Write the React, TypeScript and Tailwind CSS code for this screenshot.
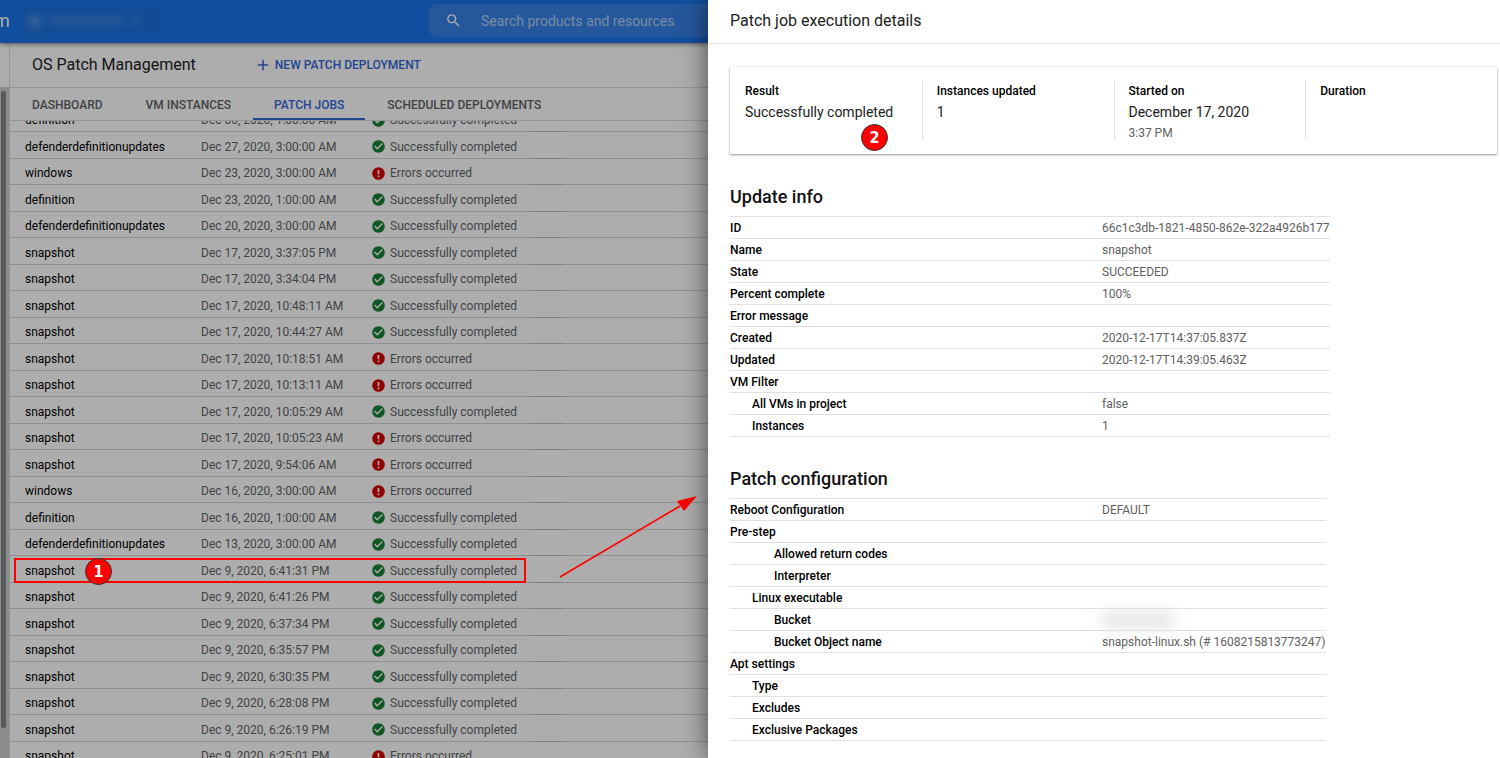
import React from 'react';
import { MdAdd, MdCheckCircle, MdSearch } from 'react-icons/md';

type Job = { name: string; date: string; ok: boolean; selected?: boolean };
type Detail = { label: string; value?: string; level?: number; redacted?: boolean };

const TABS = ['DASHBOARD', 'VM INSTANCES', 'PATCH JOBS', 'SCHEDULED DEPLOYMENTS'];

const JOBS: Job[] = [
  { name: 'definition', date: 'Dec 30, 2020, 1:00:00 AM', ok: true },
  { name: 'defenderdefinitionupdates', date: 'Dec 27, 2020, 3:00:00 AM', ok: true },
  { name: 'windows', date: 'Dec 23, 2020, 3:00:00 AM', ok: false },
  { name: 'definition', date: 'Dec 23, 2020, 1:00:00 AM', ok: true },
  { name: 'defenderdefinitionupdates', date: 'Dec 20, 2020, 3:00:00 AM', ok: true },
  { name: 'snapshot', date: 'Dec 17, 2020, 3:37:05 PM', ok: true },
  { name: 'snapshot', date: 'Dec 17, 2020, 3:34:04 PM', ok: true },
  { name: 'snapshot', date: 'Dec 17, 2020, 10:48:11 AM', ok: true },
  { name: 'snapshot', date: 'Dec 17, 2020, 10:44:27 AM', ok: true },
  { name: 'snapshot', date: 'Dec 17, 2020, 10:18:51 AM', ok: false },
  { name: 'snapshot', date: 'Dec 17, 2020, 10:13:11 AM', ok: false },
  { name: 'snapshot', date: 'Dec 17, 2020, 10:05:29 AM', ok: true },
  { name: 'snapshot', date: 'Dec 17, 2020, 10:05:23 AM', ok: false },
  { name: 'snapshot', date: 'Dec 17, 2020, 9:54:06 AM', ok: false },
  { name: 'windows', date: 'Dec 16, 2020, 3:00:00 AM', ok: false },
  { name: 'definition', date: 'Dec 16, 2020, 1:00:00 AM', ok: true },
  { name: 'defenderdefinitionupdates', date: 'Dec 13, 2020, 3:00:00 AM', ok: true },
  { name: 'snapshot', date: 'Dec 9, 2020, 6:41:31 PM', ok: true, selected: true },
  { name: 'snapshot', date: 'Dec 9, 2020, 6:41:26 PM', ok: true },
  { name: 'snapshot', date: 'Dec 9, 2020, 6:37:34 PM', ok: true },
  { name: 'snapshot', date: 'Dec 9, 2020, 6:35:57 PM', ok: true },
  { name: 'snapshot', date: 'Dec 9, 2020, 6:30:35 PM', ok: true },
  { name: 'snapshot', date: 'Dec 9, 2020, 6:28:08 PM', ok: true },
  { name: 'snapshot', date: 'Dec 9, 2020, 6:26:19 PM', ok: true },
  { name: 'snapshot', date: 'Dec 9, 2020, 6:25:01 PM', ok: false },
];

const UPDATE_INFO: Detail[] = [
  { label: 'ID', value: '66c1c3db-1821-4850-862e-322a4926b177' },
  { label: 'Name', value: 'snapshot' },
  { label: 'State', value: 'SUCCEEDED' },
  { label: 'Percent complete', value: '100%' },
  { label: 'Error message' },
  { label: 'Created', value: '2020-12-17T14:37:05.837Z' },
  { label: 'Updated', value: '2020-12-17T14:39:05.463Z' },
  { label: 'VM Filter' },
  { label: 'All VMs in project', value: 'false', level: 1 },
  { label: 'Instances', value: '1', level: 1 },
];

const PATCH_CONFIG: Detail[] = [
  { label: 'Reboot Configuration', value: 'DEFAULT' },
  { label: 'Pre-step' },
  { label: 'Allowed return codes', level: 2 },
  { label: 'Interpreter', level: 2 },
  { label: 'Linux executable', level: 1 },
  { label: 'Bucket', level: 2, redacted: true },
  { label: 'Bucket Object name', value: 'snapshot-linux.sh (# 1608215813773247)', level: 2 },
  { label: 'Apt settings' },
  { label: 'Type', level: 1 },
  { label: 'Excludes', level: 1 },
  { label: 'Exclusive Packages', level: 1 },
];

const SUMMARY = [
  { label: 'Result', value: 'Successfully completed', step: '2' },
  { label: 'Instances updated', value: '1' },
  { label: 'Started on', value: 'December 17, 2020', note: '3:37 PM' },
  { label: 'Duration' },
];

const INDENT = ['pl-0', 'pl-[22px]', 'pl-[44px]'];

const StepBadge = ({ step }: { step: string }) => (
  <span className="flex size-[27px] items-center justify-center rounded-full border border-[#333] bg-[#f00] font-['DejaVu_Sans_Condensed','DejaVu_Sans',sans-serif] text-base leading-none font-bold text-white">
    {step}
  </span>
);

const TopBar = () => (
  <header className="relative flex h-[43px] shrink-0 items-center bg-[#1a73e8] pb-[2px] shadow-[0_1px_5px_rgba(0,0,0,0.5)]">
    <span className="w-[21px] text-lg leading-6 text-white">
      <span className="float-left -ml-[6px]">m</span>
    </span>
    <button
      type="button"
      aria-label="Select project"
      className="mr-[269px] flex h-[30px] w-[139px] shrink-0 items-center bg-[#1c70de] pl-2"
    >
      <span className="size-3 rounded-full bg-white/30 blur-xs" />
      <span className="ml-2 h-2 w-[74px] bg-white/15 blur-xs" />
      <span className="ml-2 size-2 bg-white/15 blur-xs" />
    </button>
    <label className="flex h-[33px] min-w-0 flex-1 items-center rounded-l-lg bg-[#3781e8] pl-4">
      <MdSearch className="size-[17px] shrink-0 text-white" />
      <input
        type="search"
        aria-label="Search products and resources"
        placeholder="Search products and resources"
        className="ml-[19px] min-w-0 flex-1 bg-transparent text-sm text-white outline-none placeholder:text-[#b4cff5]"
      />
    </label>
  </header>
);

const ErrorIcon = () => (
  <svg viewBox="0 0 15 15" className="size-[15px]" aria-hidden="true">
    <circle cx="7.5" cy="7.5" r="6.3" fill="#d50000" />
    <path d="M7.5 4 V8.3 M7.5 9.6 V11.3" stroke="#fff" strokeWidth="1.7" />
  </svg>
);

const JobStatus = ({ ok }: { ok: boolean }) => (
  <span className="flex items-center gap-1">
    {ok ? <MdCheckCircle className="size-[15px] text-[#188038]" /> : <ErrorIcon />}
    {ok ? 'Successfully completed' : 'Errors occurred'}
  </span>
);

const JobsTable = () => (
  <table className="-mt-[15px] w-full table-fixed border-separate border-spacing-0 text-xs leading-4 text-[#5f6368]">
    <colgroup>
      <col className="w-[191px]" />
      <col className="w-[170px]" />
      <col className="w-[159px]" />
      <col className="w-[34px]" />
      <col />
    </colgroup>
    <tbody>
      {JOBS.map((job) => (
        <tr key={job.date} className="relative odd:h-[26px] even:h-[27px]">
          <td className="border-b border-[#d2d4d7] p-0 pt-[3px] pl-[15px]">
            <a href="#job" className="text-black">
              {job.name}
            </a>
            {job.selected && (
              <>
                <span className="absolute top-[2px] left-1 z-20 h-[25px] w-[512px] border-2 border-[#f00]" />
                <span className="absolute top-[2px] left-[75px] z-20">
                  <StepBadge step="1" />
                </span>
                <svg
                  className="absolute -top-[64px] left-[548px] z-20 h-[88px] w-[142px]"
                  viewBox="0 0 142 88"
                  aria-hidden="true"
                >
                  <path d="M2 85 L122 14" stroke="#f00" strokeWidth="1.6" fill="none" />
                  <path d="M139 4 L119 9 L126 19 Z" fill="#f00" />
                </svg>
              </>
            )}
          </td>
          <td className="border-b border-[#d2d4d7] p-0 pt-[3px]">{job.date}</td>
          <td className="border-b border-[#d2d4d7] p-0 pt-[3px]">
            <JobStatus ok={job.ok} />
          </td>
          <td className="border-b border-[#bcbec1] p-0" />
          <td className="border-b border-[#d2d4d7] p-0" />
        </tr>
      ))}
    </tbody>
  </table>
);

const DetailTable = ({ rows }: { rows: Detail[] }) => (
  <table className="border-separate border-spacing-0 border-t border-[#e0e0e0] text-xs leading-4">
    <tbody>
      {rows.map((row) => (
        <tr key={row.label} className="h-[22px]">
          <th
            scope="row"
            className={`w-[372px] border-b border-[#e0e0e0] p-0 pt-px text-left font-medium text-black ${INDENT[row.level ?? 0]}`}
          >
            {row.label}
          </th>
          <td className="border-b border-[#e0e0e0] p-0 pt-px whitespace-nowrap text-[#616161]">
            {row.redacted ? <span className="block h-3 w-[72px] bg-[#dcdcdc] blur-sm" /> : row.value}
          </td>
        </tr>
      ))}
    </tbody>
  </table>
);

const JobDrawer = () => (
  <aside className="relative z-30 flex w-[52.8%] shrink-0 flex-col overflow-visible bg-white shadow-[0_0_24px_rgba(0,0,0,0.6)]">
    <h2 className="flex h-[44px] shrink-0 items-center border-b border-[#e0e0e0] px-[22px] pb-[2px] text-base text-[#212121]">
      Patch job execution details
    </h2>
    <div className="pt-[23px] pr-[3px] pl-[22px]">
      <dl className="grid grid-cols-4 py-[14px] shadow-[0_1px_2px_rgba(0,0,0,0.4),0_0_1px_rgba(0,0,0,0.2)]">
        {SUMMARY.map((item) => (
          <div
            key={item.label}
            className="relative h-[59px] border-l border-[#e0e0e0] pl-[14px] first:border-transparent"
          >
            <dt className="pt-[2px] text-xs leading-4 font-medium text-black">{item.label}</dt>
            <dd className="pt-[3px] text-sm leading-5 text-[#212121]">{item.value}</dd>
            {item.note && <dd className="pt-[3px] text-xs leading-4 text-[#616161]">{item.note}</dd>}
            {item.step && (
              <span className="absolute top-[43px] left-[130px]">
                <StepBadge step={item.step} />
              </span>
            )}
          </div>
        ))}
      </dl>
      <h3 className="mt-[31px] mb-[7px] text-lg leading-6 font-medium text-[#111]">Update info</h3>
      <DetailTable rows={UPDATE_INFO} />
      <h3 className="mt-[30px] mb-[7px] text-lg leading-6 font-medium text-[#111]">Patch configuration</h3>
      <DetailTable rows={PATCH_CONFIG} />
    </div>
  </aside>
);

const App = () => {
  return (
    <div className="flex h-screen overflow-hidden bg-white font-[Roboto,sans-serif]">
      <div className="relative flex min-w-0 flex-1 flex-col overflow-hidden">
        <TopBar />
        <div className="flex min-h-0 flex-1">
          <div className="flex w-[10px] shrink-0 flex-col border-r border-[#dadce0] pt-[44px]">
            <div className="flex-1 bg-[#cfcfcf] pt-1 pb-[30px] pl-px">
              <div className="h-full w-[5px] rounded-full bg-[#818386]" />
            </div>
          </div>
          <main className="flex min-w-0 flex-1 flex-col">
            <div className="flex h-[45px] shrink-0 items-center border-b border-[#dadce0] pl-[22px]">
              <h1 className="mr-[58px] text-base text-[#202124]">OS Patch Management</h1>
              <button type="button" className="flex items-center gap-[3px] text-xs font-medium text-[#3367d6]">
                <MdAdd className="size-[18px]" />
                NEW PATCH DEPLOYMENT
              </button>
            </div>
            <nav className="flex h-[33px] shrink-0 gap-px border-b border-[#dadce0] pl-px">
              {TABS.map((tab) => (
                <button
                  key={tab}
                  type="button"
                  className={`border-b-2 px-[21px] pt-[3px] text-xs font-medium ${
                    tab === 'PATCH JOBS' ? 'border-[#3367d6] text-[#3367d6]' : 'border-transparent text-[#5f6368]'
                  }`}
                >
                  {tab}
                </button>
              ))}
            </nav>
            <div className="min-h-0 flex-1 overflow-hidden">
              <JobsTable />
            </div>
          </main>
        </div>
        <div className="absolute inset-0 z-10 bg-black/32" />
      </div>
      <JobDrawer />
    </div>
  );
};

export default App;
